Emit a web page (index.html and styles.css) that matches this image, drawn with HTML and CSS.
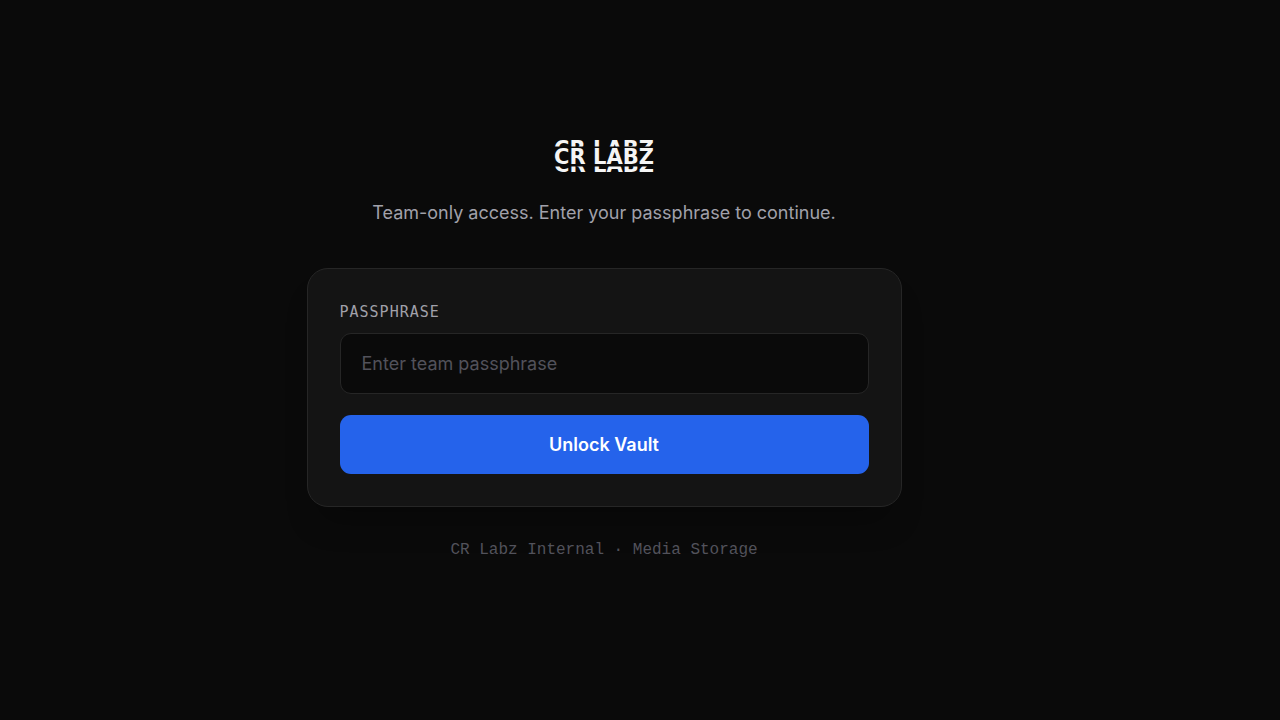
FILE: index.html
```html
<!DOCTYPE html>
<html lang="en">
<head>
    <meta charset="UTF-8">
    <meta name="viewport" content="width=device-width, initial-scale=1.0">
    <title>CR Labz Vault</title>
    <link rel="stylesheet" href="styles.css">
</head>
<body>
    <main class="login">
        <h1 class="logo" data-text="CR LABZ">CR LABZ</h1>
        <p class="intro">Team-only access. Enter your passphrase to continue.</p>

        <form class="card">
            <label class="label" for="passphrase">PASSPHRASE</label>
            <input class="field" type="password" id="passphrase" placeholder="Enter team passphrase">
            <button class="unlock" type="submit">Unlock Vault</button>
        </form>

        <p class="footer">CR Labz Internal · Media Storage</p>
    </main>
</body>
</html>
```
FILE: styles.css
```css
* {
    margin: 0;
    padding: 0;
    box-sizing: border-box;
}
body {
    min-height: 100vh;
    display: flex;
    justify-content: center;
    align-items: center;
    padding: 0 88px 20px 16px;
    background: #0a0a0a;
    font-family: Inter, "Liberation Sans", sans-serif;
    font-size: 18px;
    color: #f5f5f5;
}
.login {
    width: 100%;
    max-width: 595px;
    text-align: center;
}
/* wordmark with cut-off echoes above and below */
.logo {
    position: relative;
    width: max-content;
    margin: 0 auto 25px;
    font-family: "DejaVu Sans", sans-serif;
    font-size: 21px;
    font-weight: bold;
    line-height: 34px;
}
.logo::before,
.logo::after {
    content: attr(data-text);
    position: absolute;
    left: 0;
}
.logo::before {
    top: -8px;
    clip-path: inset(0 0 19px 0);
}
.logo::after {
    top: 8px;
    clip-path: inset(19px 0 0 0);
}
.intro {
    margin-bottom: 41px;
    line-height: 28px;
    color: #a1a1aa;
}
.card {
    display: flex;
    flex-direction: column;
    padding: 32px;
    background: #141414;
    border: 1px solid #262626;
    border-radius: 21px;
    box-shadow: 0 24px 32px -12px rgba(0, 0, 0, 0.3);
    text-align: left;
}
.label {
    margin-bottom: 10px;
    font-family: "DejaVu Sans Mono", monospace;
    font-size: 15px;
    letter-spacing: 1px;
    line-height: 22px;
    color: #a1a1aa;
}
.field {
    width: 100%;
    height: 61px;
    margin-bottom: 21px;
    padding: 0 21px;
    background: #0a0a0a;
    border: 1px solid #262626;
    border-radius: 11px;
    font: inherit;
    color: #f5f5f5;
}
.field::placeholder {
    color: #52525b;
}
.field:focus {
    outline: none;
    border-color: #2563eb;
}
.unlock {
    height: 59px;
    background: #2563eb;
    border: none;
    border-radius: 11px;
    font: inherit;
    font-weight: 600;
    color: white;
    cursor: pointer;
}
.unlock:hover {
    background: #1d4ed8;
}
.footer {
    margin-top: 33px;
    font-family: "Liberation Mono", monospace;
    font-size: 16px;
    line-height: 21px;
    color: #52525b;
}
```
